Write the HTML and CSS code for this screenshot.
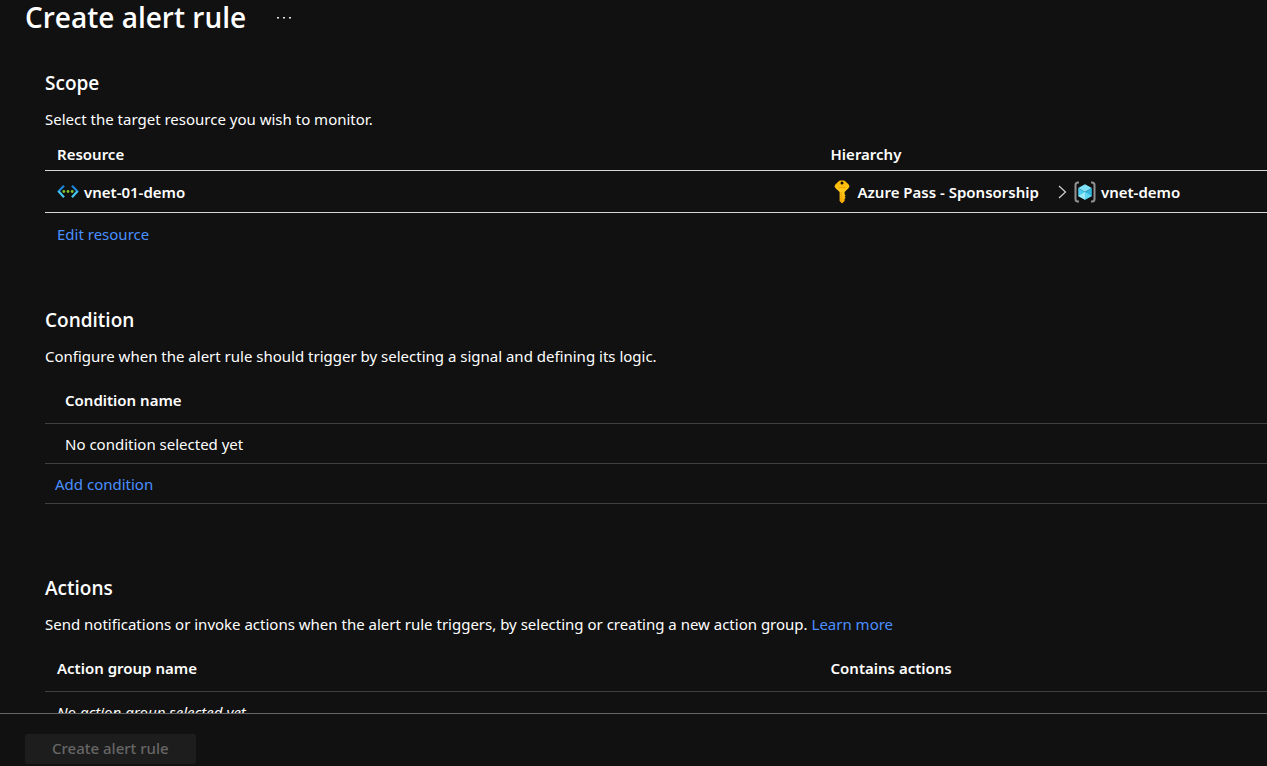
FILE: index.html
```html
<!DOCTYPE html>
<html lang="en">
<head>
<meta charset="utf-8">
<title>Create alert rule</title>
<link rel="stylesheet" href="styles.css">
</head>
<body>
<div class="page">
  <header class="page-header">
    <h1 class="page-title">Create alert rule</h1>
    <button class="more" type="button" aria-label="More actions">
      <svg width="16" height="4" viewBox="0 0 16 4" fill="#e8e8e8"><path d="M1 2h2v1.500H1zM7 2h2v1.500H7zM13 2h2v1.500h-2z"/></svg>
    </button>
  </header>

  <main class="content">
    <section class="section scope">
      <h2 class="section-title">Scope</h2>
      <p class="section-text">Select the target resource you wish to monitor.</p>
      <table class="grid">
        <thead>
          <tr><th class="col-main">Resource</th><th>Hierarchy</th></tr>
        </thead>
        <tbody>
          <tr>
            <td>
              <div class="item">
                <svg width="22" height="16" viewBox="0 0 22 16" fill="none" stroke-width="2.200">
                  <path d="M7 1.800.9 8" stroke="#1c86dc"/><path d="M1.600 7.300 7 13.300" stroke="#46c8ee"/>
                  <path d="M15 1.800 21.100 8" stroke="#1c86dc"/><path d="M20.400 7.300 15 13.300" stroke="#46c8ee"/>
                  <g fill="#7fc32a"><circle cx="6.800" cy="7.500" r="1.400"/><circle cx="11" cy="7.500" r="1.400"/><circle cx="15.200" cy="7.500" r="1.400"/></g>
                </svg>
                <span>vnet-01-demo</span>
              </div>
            </td>
            <td>
              <div class="item">
                <svg width="22" height="24" viewBox="0 0 22 24">
                  <defs><linearGradient id="gold" x1="0" y1="0" x2="0" y2="1"><stop offset="0" stop-color="#ffb900"/><stop offset=".5" stop-color="#ffca1c"/><stop offset="1" stop-color="#f9a800"/></linearGradient></defs>
                  <path fill="url(#gold)" fill-rule="evenodd" d="M9.400 .5h3.200c.8 0 1.300.3 1.900.9l2.900 2.800c1.300 1.200 1.300 2.900 0 4.100L13.600 12v2.200l1 1-.9 1.300.9 1.200-1 1.200v2.200L11 23.400l-2.400-2.300V12L4.600 8.300c-1.300-1.200-1.300-2.900 0-4.100l2.900-2.800c.6-.6 1.100-.9 1.900-.9zM11 1.500a1.500 1.500 0 1 0 0 3 1.500 1.500 0 0 0 0-3z"/>
                  <path d="M7.500 7.500h7" stroke="#f0a000"/><path d="M10.200 12v9" stroke="#f0a000"/>
                </svg>
                <span>Azure Pass - Sponsorship</span>
                <svg class="chevron" width="9" height="14" viewBox="0 0 9 14" fill="none" stroke="#d0d0d0" stroke-width="1.200"><path d="m1 1 6.500 6L1 13"/></svg>
                <svg width="22" height="22" viewBox="0 0 22 22">
                  <g fill="none" stroke="#929292" stroke-width="2"><path d="M5 1.500H4Q1.500 1.500 1.500 4v14q0 2.500 2.500 2.500h1M17 1.500h1q2.500 0 2.500 2.500v14q0 2.500-2.500 2.500h-1"/></g>
                  <path fill="#7fe2f8" d="m11 3.200 6.800 3.900L11 11 4.200 7.100z"/>
                  <path fill="#4bcbee" d="M4.200 7.100 11 11v7.800l-6.800-3.900z"/><path fill="#32b4dc" d="M17.800 7.100 11 11v7.800l6.800-3.900z"/>
                  <path fill="#9beafa" d="M4.200 14.900 11 11v7.800z"/><path fill="#61d6f2" d="M17.800 14.900 11 11v7.800z"/>
                </svg>
                <span>vnet-demo</span>
              </div>
            </td>
          </tr>
        </tbody>
      </table>
      <a class="link edit" href="#">Edit resource</a>
    </section>

    <section class="section condition">
      <h2 class="section-title">Condition</h2>
      <p class="section-text">Configure when the alert rule should trigger by selecting a signal and defining its logic.</p>
      <table class="grid tall wide-pad">
        <thead><tr><th>Condition name</th></tr></thead>
        <tbody>
          <tr><td>No condition selected yet</td></tr>
          <tr><td class="add"><a class="link" href="#">Add condition</a></td></tr>
        </tbody>
      </table>
    </section>

    <section class="section">
      <h2 class="section-title">Actions</h2>
      <p class="section-text">Send notifications or invoke actions when the alert rule triggers, by selecting or creating a new action group. <a class="link" href="#">Learn more</a></p>
      <table class="grid tall">
        <thead><tr><th class="col-main">Action group name</th><th>Contains actions</th></tr></thead>
        <tbody><tr><td class="empty" colspan="2">No action group selected yet</td></tr></tbody>
      </table>
    </section>
  </main>

  <footer class="page-footer">
    <button class="submit" type="button" disabled>Create alert rule</button>
  </footer>
</div>
</body>
</html>
```
FILE: styles.css
```css
* { box-sizing: border-box; }

body {
  margin: 0;
  background: #111;
  color: #fff;
  font: 15px/20px "Noto Sans", "Open Sans", sans-serif;
}

.page {
  display: flex;
  flex-direction: column;
  height: 100vh;
}

.page-header {
  display: flex;
  align-items: center;
  gap: 26px;
  padding-left: 25px;
}

.page-title {
  margin: 0;
  font-family: "Open Sans", "Noto Sans", sans-serif;
  font-size: 28px;
  line-height: 34px;
  font-weight: 600;
}

.more {
  display: flex;
  padding: 4px;
  border: 0;
  background: none;
}

.content {
  flex: 1;
  min-height: 0;
  overflow: hidden;
  padding: 35px 0 0 45px;
}

.section { margin-bottom: 70px; }
.scope { margin-bottom: 62px; }

.section-title {
  margin: 0 0 12px;
  font-family: "Open Sans", "Noto Sans", sans-serif;
  font-size: 19px;
  line-height: 28px;
  font-weight: 600;
}

.section-text { margin: 0; }

.grid {
  width: 100%;
  margin-top: 10px;
  border-collapse: separate;
  border-spacing: 0;
  table-layout: fixed;
}

.grid th,
.grid td {
  height: 42px;
  padding: 0 12px;
  border-bottom: 1px solid #d6d6d6;
  text-align: left;
}

.grid th {
  height: 32px;
  padding-bottom: 2px;
  font-weight: 600;
}

.grid .col-main { width: 63.3%; }

.grid.tall { margin-top: 12px; }

.grid.tall th,
.grid.tall td {
  height: 40px;
  border-color: #404040;
}

.grid.tall th { height: 46px; }

.grid.wide-pad th,
.grid.wide-pad td { padding-left: 20px; }

.grid.wide-pad .add { padding-left: 10px; }

.empty { font-style: italic; }

.item {
  display: flex;
  align-items: center;
  gap: 5px;
  font-weight: 600;
  white-space: nowrap;
}

.chevron { margin: 0 2px 0 14px; }

.link {
  color: #4a8fff;
  text-decoration: none;
}

.edit {
  display: block;
  width: fit-content;
  margin: 11px 12px 0;
}

.page-footer {
  padding: 20px 25px 2px;
  border-top: 1px solid #666;
}

.submit {
  display: block;
  height: 30px;
  padding: 0 27px 2px;
  border: 0;
  border-radius: 2px;
  background: #1d1d1d;
  color: #666;
  font: inherit;
  font-weight: 500;
}
```
